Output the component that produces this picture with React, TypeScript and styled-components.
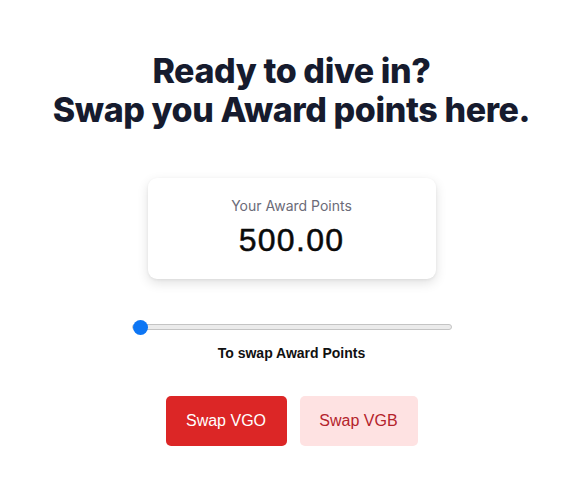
import React, { useState } from "react";
import styled, { createGlobalStyle } from "styled-components";

const Global = createGlobalStyle`
  html, body { margin: 0; padding: 0; background: #ffffff; }
  body { font-family: Inter, "Noto Sans", sans-serif; }
`;

const Page = styled.main`
  display: flex;
  flex-direction: column;
  align-items: center;
  padding-top: 51px;
`;

const Title = styled.h1`
  margin: 0;
  font-family: Inter, sans-serif;
  font-weight: 800;
  font-size: 34px;
  line-height: 39px;
  letter-spacing: -0.4px;
  color: #161b2e;
  text-align: center;
`;

const Card = styled.section`
  margin-top: 49px;
  width: 288px;
  height: 101px;
  box-sizing: border-box;
  border-radius: 9px;
  background: #fff;
  box-shadow: 0 4px 12px rgba(0, 0, 0, 0.12), 0 1px 3px rgba(0, 0, 0, 0.06);
  display: flex;
  flex-direction: column;
  align-items: center;
  padding-top: 20px;
`;

const CardLabel = styled.div`
  font-family: Inter, sans-serif;
  font-size: 14px;
  line-height: 16px;
  color: #6b6b78;
`;

const CardValue = styled.div`
  margin-top: 7px;
  font-family: "Liberation Sans", Arial, sans-serif;
  font-size: 32px;
  line-height: 38px;
  letter-spacing: 1.3px;
  -webkit-text-stroke: 0.5px #0a0a0a;
  color: #0a0a0a;
`;

const Range = styled.input`
  margin: 40px 0 0 0;
  padding: 0;
  width: 320px;
  height: 16px;
  -webkit-appearance: none;
  appearance: none;
  background: transparent;
  &::-webkit-slider-runnable-track {
    height: 6px;
    border-radius: 4px;
    background: #ebebeb;
    border: 1px solid #c4c4c4;
  }
  &::-webkit-slider-thumb {
    -webkit-appearance: none;
    width: 15px;
    height: 15px;
    border-radius: 50%;
    background: #0d76f4;
    margin-top: -5.5px;
    border: none;
  }
`;

const RangeLabel = styled.div`
  margin-top: 10px;
  font-family: "Liberation Sans", Arial, sans-serif;
  font-size: 14px;
  line-height: 17px;
  font-weight: 700;
  color: #111;
`;

const Buttons = styled.div`
  margin-top: 34px;
  display: flex;
  gap: 13px;
`;

const Button = styled.button<{ $primary?: boolean }>`
  height: 50px;
  width: ${(p) => (p.$primary ? "121px" : "118px")};
  border: none;
  border-radius: 5px;
  font-family: "Liberation Sans", Arial, sans-serif;
  font-size: 16px;
  background: ${(p) => (p.$primary ? "#dc2626" : "#fee2e2")};
  color: ${(p) => (p.$primary ? "#ffffff" : "#b4232b")};
  cursor: pointer;
`;

export default function App() {
  const [value, setValue] = useState(0);
  return (
    <>
      <Global />
      <Page>
        <Title>
          Ready to dive in?
          <br />
          Swap you Award points here.
        </Title>
        <Card>
          <CardLabel>Your Award Points</CardLabel>
          <CardValue>500.00</CardValue>
        </Card>
        <Range
          type="range"
          min={0}
          max={500}
          value={value}
          onChange={(e) => setValue(Number(e.target.value))}
        />
        <RangeLabel>To swap Award Points</RangeLabel>
        <Buttons>
          <Button $primary>Swap VGO</Button>
          <Button>Swap VGB</Button>
        </Buttons>
      </Page>
    </>
  );
}
